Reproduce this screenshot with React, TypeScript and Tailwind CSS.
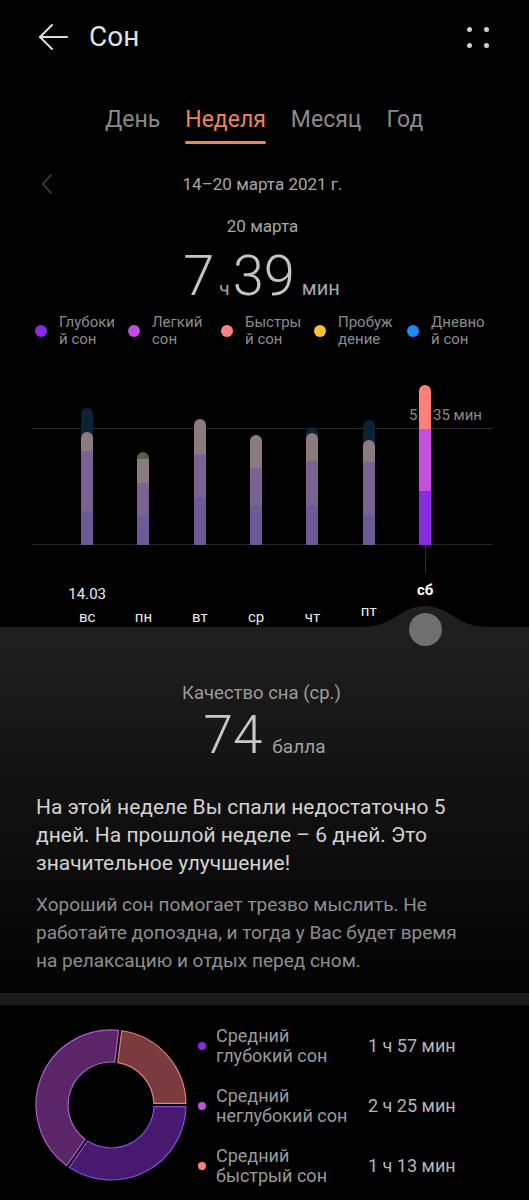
import React from 'react';

const tabs = ['День', 'Неделя', 'Месяц', 'Год'];

const legend = [
  { color: 'bg-[#8a2be2]', l1: 'Глубоки', l2: 'й сон' },
  { color: 'bg-[#c34fe0]', l1: 'Легкий', l2: 'сон' },
  { color: 'bg-[#ff8080]', l1: 'Быстры', l2: 'й сон' },
  { color: 'bg-[#ffc02e]', l1: 'Пробуж', l2: 'дение' },
  { color: 'bg-[#1e88ff]', l1: 'Дневно', l2: 'й сон' },
];

// segment heights from top to bottom, px
type Bar = { nap?: number; segs: { h: number; c: string }[] };
const bars: Bar[] = [
  { nap: 137, segs: [{ h: 19, c: 'bg-[#8b7a7e]' }, { h: 60, c: 'bg-[#7a6393]' }, { h: 34, c: 'bg-[#6b5a93]' }] },
  { segs: [{ h: 7, c: 'bg-[#5f5d41]' }, { h: 24, c: 'bg-[#8b7a7e]' }, { h: 33, c: 'bg-[#7a6393]' }, { h: 29, c: 'bg-[#6b5a93]' }] },
  { segs: [{ h: 35, c: 'bg-[#8b7a7e]' }, { h: 44, c: 'bg-[#7a6393]' }, { h: 47, c: 'bg-[#6b5a93]' }] },
  { segs: [{ h: 33, c: 'bg-[#8b7a7e]' }, { h: 38, c: 'bg-[#7a6393]' }, { h: 39, c: 'bg-[#6b5a93]' }] },
  { nap: 118, segs: [{ h: 28, c: 'bg-[#8b7a7e]' }, { h: 45, c: 'bg-[#7a6393]' }, { h: 39, c: 'bg-[#6b5a93]' }] },
  { nap: 125, segs: [{ h: 22, c: 'bg-[#8b7a7e]' }, { h: 53, c: 'bg-[#7a6393]' }, { h: 30, c: 'bg-[#6b5a93]' }] },
  { segs: [{ h: 44, c: 'bg-[#ff7f7b]' }, { h: 62, c: 'bg-[#c74fdf]' }, { h: 54, c: 'bg-[#8a2be2]' }] },
];

const days = ['вс', 'пн', 'вт', 'ср', 'чт', 'пт', 'сб'];

const summary = [
  { dot: 'bg-[#8a2be2]', l1: 'Средний', l2: 'глубокий сон', value: '1 ч 57 мин' },
  { dot: 'bg-[#c34fe0]', l1: 'Средний', l2: 'неглубокий сон', value: '2 ч 25 мин' },
  { dot: 'bg-[#ff8080]', l1: 'Средний', l2: 'быстрый сон', value: '1 ч 13 мин' },
];

function Donut() {
  const c = 76;
  const ro = 75;
  const ri = 43;
  const g = 1.6;
  const pt = (r: number, deg: number) => {
    const a = (deg * Math.PI) / 180;
    return `${(c + r * Math.sin(a)).toFixed(2)} ${(c - r * Math.cos(a)).toFixed(2)}`;
  };
  const seg = (a0: number, a1: number) => {
    const go = (Math.asin(g / ro) * 180) / Math.PI;
    const gi = (Math.asin(g / ri) * 180) / Math.PI;
    const large = a1 - a0 > 180 ? 1 : 0;
    return `M${pt(ro, a0 + go)} A${ro} ${ro} 0 ${large} 1 ${pt(ro, a1 - go)} L${pt(ri, a1 - gi)} A${ri} ${ri} 0 ${large} 0 ${pt(ri, a0 + gi)} Z`;
  };
  return (
    <svg width="152" height="152" viewBox="0 0 152 152">
      <path d={seg(7, 90)} fill="#7b3a3d" stroke="#e47f7b" strokeWidth="1.2" />
      <path d={seg(90, 215)} fill="#47196f" stroke="#8d4ae2" strokeWidth="1.2" />
      <path d={seg(215, 367)} fill="#5b2668" stroke="#b35ccd" strokeWidth="1.2" />
    </svg>
  );
}

export default function App() {
  return (
    <div className="w-[529px] min-h-[1200px] bg-black font-['Roboto',sans-serif] overflow-hidden">
      {/* header */}
      <div className="h-[74px] flex items-center pl-[38px] pr-[40px]">
        <svg width="30" height="28" viewBox="0 0 30 28" fill="none" stroke="#dcdcdc" strokeWidth="2" strokeLinecap="round" strokeLinejoin="round">
          <path d="M2 14H29" />
          <path d="M14 2L2 14L14 26" />
        </svg>
        <span className="ml-[21px] text-[28px] leading-[34px] text-[#e2e2e2]">Сон</span>
        <div className="ml-auto grid grid-cols-2 gap-x-[12px] gap-y-[11px]">
          <span className="w-[5px] h-[5px] rounded-full bg-[#cfcfcf]" />
          <span className="w-[5px] h-[5px] rounded-full bg-[#cfcfcf]" />
          <span className="w-[5px] h-[5px] rounded-full bg-[#cfcfcf]" />
          <span className="w-[5px] h-[5px] rounded-full bg-[#cfcfcf]" />
        </div>
      </div>

      {/* tabs */}
      <div className="pt-[32px] pl-[105px] flex gap-[25px]">
        {tabs.map((t) => (
          <div key={t} className="flex flex-col items-stretch">
            <span className={`text-[23px] leading-[28px] ${t === 'Неделя' ? 'text-[#f0845a]' : 'text-[#8a8a8a]'}`}>{t}</span>
            <span className={`mt-[7px] h-[3px] rounded-full ${t === 'Неделя' ? 'bg-[#f0845a]' : 'bg-transparent'}`} />
          </div>
        ))}
      </div>

      {/* period */}
      <div className="mt-[28px] h-[24px] flex items-center relative">
        <svg className="ml-[40px]" width="14" height="20" viewBox="0 0 14 20" fill="none" stroke="#444" strokeWidth="1.6" strokeLinecap="round">
          <path d="M11 1L3 10L11 19" />
        </svg>
        <span className="absolute left-0 right-[4px] text-center text-[17px] leading-[24px] text-[#a8a8a8]">14–20 марта 2021 г.</span>
      </div>
      <div className="mt-[18px] h-[24px] pr-[4px] text-center text-[17px] leading-[24px] text-[#a8a8a8]">20 марта</div>

      <div className="mt-[6px] h-[64px] pr-[6px] flex items-baseline justify-center text-[#c4c4c4]">
        <span className="text-[56px] leading-[64px] font-light">7</span>
        <span className="ml-[5px] text-[19px] text-[#a8a8a8]">ч</span>
        <span className="ml-[3px] text-[56px] leading-[64px] font-light">39</span>
        <span className="ml-[7px] text-[20px] text-[#a8a8a8]">мин</span>
      </div>

      {/* legend */}
      <div className="mt-[6px] pl-[35px] flex">
        {legend.map((l) => (
          <div key={l.l1} className="w-[93px] flex items-center">
            <span className={`w-[12px] h-[12px] rounded-full ${l.color}`} />
            <div className="ml-[12px] text-[15px] leading-[17px] text-[#8c8c8c]">
              <div>{l.l1}</div>
              <div>{l.l2}</div>
            </div>
          </div>
        ))}
      </div>

      {/* chart */}
      <div className="mt-[22px] h-[175px] relative">
        <div className="absolute left-[32px] w-[461px] top-[58px] h-px bg-[#2c2c2c]" />
        <div className="absolute left-[32px] w-[461px] bottom-0 h-px bg-[#262626]" />
        <span className="absolute right-[47px] top-[36px] text-[15px] leading-[18px] text-[#8a8a8a]">5 ч 35 мин</span>
        <div className="relative h-full pl-[59px] flex items-end">
          {bars.map((b, i) => (
            <div key={i} className="w-[56.33px] h-full flex justify-center items-end">
              <div className="relative w-[12px]">
                {b.nap && (
                  <div className="absolute bottom-0 left-0 w-[12px] rounded-t-full bg-[#0c2337]" style={{ height: b.nap }} />
                )}
                <div className="relative flex flex-col rounded-t-[6px] overflow-hidden">
                  {b.segs.map((s, j) => (
                    <div key={j} className={s.c} style={{ height: s.h }} />
                  ))}
                </div>
              </div>
            </div>
          ))}
        </div>
      </div>
      <div className="h-[35px] pl-[59px] flex">
        <div className="w-[337.98px]" />
        <div className="w-[56.33px] flex justify-center">
          <div className="w-px h-[29px] bg-[#3b1d5c]" />
        </div>
      </div>

      {/* day labels */}
      <div className="h-[47px] pl-[59px] flex">
        {days.map((d, i) => (
          <div key={d} className="w-[56.33px] flex flex-col items-center justify-end">
            {i === 0 && <span className="text-[15px] leading-[20px] text-[#ececec]">14.03</span>}
            <span
              className={`text-[15px] leading-[20px] ${i === 6 ? 'font-bold text-white mb-[27px]' : 'text-[#ececec]'} ${i === 5 ? 'mb-[6px]' : ''} ${i === 0 ? 'mt-[3px]' : ''}`}
            >
              {d}
            </span>
          </div>
        ))}
      </div>

      {/* quality panel */}
      <div className="relative bg-linear-to-b from-[#1f1f1f] to-[#040404] px-[36px] pt-[54px] pb-[18px]">
        <svg className="absolute left-0 top-[-22px]" width="529" height="23" viewBox="0 0 529 23">
          <path d="M0 22 L362 22 C394 22 400 1 425 1 C450 1 456 22 488 22 L529 22 L529 23 L0 23 Z" fill="#1f1f1f" />
        </svg>
        <div className="absolute left-[409px] top-[-14px] w-[33px] h-[33px] rounded-full bg-[#6f6f6f]" />

        <div className="pr-[6px] text-center text-[18.5px] leading-[24px] text-[#9c9c9c]">Качество сна (ср.)</div>
        <div className="mt-[2px] h-[56px] flex items-baseline justify-center">
          <span className="text-[53px] leading-[56px] font-light text-[#c8c8c8]">74</span>
          <span className="ml-[10px] text-[19px] text-[#a2a2a2]">балла</span>
        </div>

        <div className="mt-[30px] text-[21px] leading-[28px] text-[#d2d2d2] whitespace-nowrap">
          <div>На этой неделе Вы спали недостаточно 5</div>
          <div>дней. На прошлой неделе – 6 дней. Это</div>
          <div>значительное улучшение!</div>
        </div>
        <div className="mt-[14px] text-[19px] leading-[28px] text-[#8e8e8e] whitespace-nowrap">
          <div>Хороший сон помогает трезво мыслить. Не</div>
          <div>работайте допоздна, и тогда у Вас будет время</div>
          <div>на релаксацию и отдых перед сном.</div>
        </div>
      </div>
      <div className="h-[12px] bg-[#1c1c1c]" />

      {/* summary */}
      <div className="pt-[21px] pl-[35px] flex items-start">
        <div className="mt-[3px]">
          <Donut />
        </div>
        <div className="ml-[11px] flex flex-col gap-[20px]">
          {summary.map((s) => (
            <div key={s.l2} className="flex items-center h-[40px]">
              <span className={`w-[8px] h-[8px] rounded-full ${s.dot}`} />
              <div className="ml-[10px] w-[152px] text-[18px] leading-[20px] text-[#9a9a9a]">
                <div>{s.l1}</div>
                <div>{s.l2}</div>
              </div>
              <span className="text-[18px] leading-[20px] text-[#b5b5b5] whitespace-nowrap">{s.value}</span>
            </div>
          ))}
        </div>
      </div>
    </div>
  );
}
